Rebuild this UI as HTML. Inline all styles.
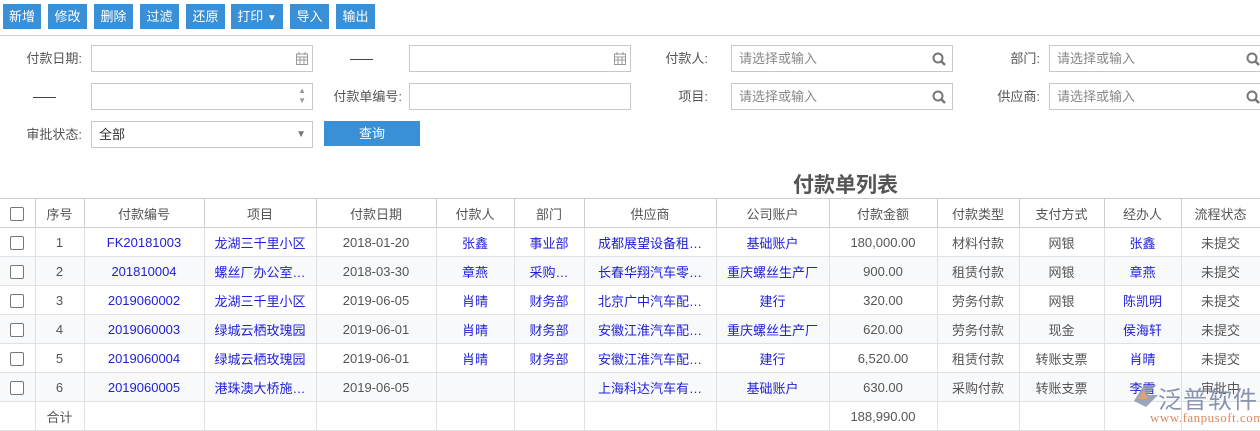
<!DOCTYPE html>
<html><head><meta charset="utf-8"><style>
*{box-sizing:border-box;margin:0;padding:0}
body{width:1260px;height:429px;overflow:hidden;background:#fff;font-family:"Liberation Sans","Noto Sans CJK SC",sans-serif;font-size:13px;color:#555;position:relative}
.b{position:absolute;top:4px;height:25px;background:#3a90d6;color:#fff;text-align:center;line-height:25px;font-size:13px}
.sep{position:absolute;top:35px;left:0;width:1260px;height:1px;background:#ccc}
.lbl{position:absolute;text-align:right;font-size:13px;color:#555;line-height:27px}
.in{position:absolute;height:27px;border:1px solid #c8c8c8;background:#fff;color:#888;line-height:25px;padding-left:7px;font-size:13px}
.dash{position:absolute;width:23px;height:1px;background:#444}
.ico{position:absolute;right:4px;top:6px}
table{position:absolute;left:0;top:198px;border-collapse:collapse;border-top:1px solid #2b82c4;table-layout:fixed;width:1260px}
td,th{border:1px solid #e0e0e0;height:29px;text-align:center;font-weight:normal;white-space:nowrap;overflow:hidden;font-size:13px;color:#555}
th{color:#555;border-color:#ccc}
tr:nth-child(odd) td{background:#f8f9fa}
td.l{color:#2020d8}
.cb{display:inline-block;width:14px;height:14px;border:1px solid #777;border-radius:2px;vertical-align:middle;background:#fff}
td:first-child,th:first-child{border-left:none}
</style></head><body>
<div class="b" style="left:3px;width:38px">新增</div>
<div class="b" style="left:48px;width:39px">修改</div>
<div class="b" style="left:94px;width:39px">删除</div>
<div class="b" style="left:140px;width:39px">过滤</div>
<div class="b" style="left:186px;width:39px">还原</div>
<div class="b" style="left:231px;width:52px">打印 <span style="font-size:10px">▼</span></div>
<div class="b" style="left:290px;width:39px">导入</div>
<div class="b" style="left:336px;width:39px">输出</div>
<div class="sep"></div>

<div class="lbl" style="left:0;width:82px;top:45px">付款日期:</div>
<div class="in" style="left:91px;top:45px;width:222px"><svg class="ico" width="12" height="13" viewBox="0 0 12 13"><rect x="0.5" y="2" width="11" height="10.5" fill="#fff" stroke="#999"/><path d="M1 5h10M1 8h10M4 5v7M8 5v7M3 0v3M9 0v3" stroke="#999"/></svg></div>
<div class="dash" style="left:350px;top:59px"></div>
<div class="in" style="left:409px;top:45px;width:222px"><svg class="ico" width="12" height="13" viewBox="0 0 12 13"><rect x="0.5" y="2" width="11" height="10.5" fill="#fff" stroke="#999"/><path d="M1 5h10M1 8h10M4 5v7M8 5v7M3 0v3M9 0v3" stroke="#999"/></svg></div>
<div class="lbl" style="left:640px;width:68px;top:45px">付款人:</div>
<div class="in" style="left:731px;top:45px;width:222px">请选择或输入<svg class="ico" width="14" height="14" viewBox="0 0 14 14" style="top:6px;right:6px"><circle cx="6" cy="6" r="4.5" fill="none" stroke="#777" stroke-width="2"/><path d="M9 9l4 4" stroke="#777" stroke-width="2.5"/></svg></div>
<div class="lbl" style="left:960px;width:80px;top:45px">部门:</div>
<div class="in" style="left:1049px;top:45px;width:222px">请选择或输入<svg width="14" height="14" viewBox="0 0 14 14" style="position:absolute;left:196px;top:6px"><circle cx="6" cy="6" r="4.5" fill="none" stroke="#777" stroke-width="2"/><path d="M9 9l4 4" stroke="#777" stroke-width="2.5"/></svg></div>

<div class="dash" style="left:33px;top:97px"></div>
<div class="in" style="left:91px;top:83px;width:222px"><span style="position:absolute;right:6px;top:2px;font-size:8px;color:#999;line-height:10px">▲<br>▼</span></div>
<div class="lbl" style="left:310px;width:92px;top:83px">付款单编号:</div>
<div class="in" style="left:409px;top:83px;width:222px"></div>
<div class="lbl" style="left:640px;width:68px;top:83px">项目:</div>
<div class="in" style="left:731px;top:83px;width:222px">请选择或输入<svg class="ico" width="14" height="14" viewBox="0 0 14 14" style="top:6px;right:6px"><circle cx="6" cy="6" r="4.5" fill="none" stroke="#777" stroke-width="2"/><path d="M9 9l4 4" stroke="#777" stroke-width="2.5"/></svg></div>
<div class="lbl" style="left:960px;width:80px;top:83px">供应商:</div>
<div class="in" style="left:1049px;top:83px;width:222px">请选择或输入<svg width="14" height="14" viewBox="0 0 14 14" style="position:absolute;left:196px;top:6px"><circle cx="6" cy="6" r="4.5" fill="none" stroke="#777" stroke-width="2"/><path d="M9 9l4 4" stroke="#777" stroke-width="2.5"/></svg></div>

<div class="lbl" style="left:0;width:82px;top:121px">审批状态:</div>
<div class="in" style="left:91px;top:121px;width:222px;color:#333">全部<span style="position:absolute;right:6px;top:0;font-size:10px;color:#777">▼</span></div>
<div class="b" style="left:324px;top:121px;width:96px">查询</div>

<div style="position:absolute;left:793px;top:169px;font-size:21px;font-weight:bold;color:#555">付款单列表</div>

<table>
<colgroup><col style="width:35px"><col style="width:49px"><col style="width:120px"><col style="width:112px"><col style="width:120px"><col style="width:78px"><col style="width:70px"><col style="width:132px"><col style="width:113px"><col style="width:108px"><col style="width:82px"><col style="width:85px"><col style="width:77px"><col style="width:79px"></colgroup>
<tr><th><span class="cb"></span></th><th>序号</th><th>付款编号</th><th>项目</th><th>付款日期</th><th>付款人</th><th>部门</th><th>供应商</th><th>公司账户</th><th>付款金额</th><th>付款类型</th><th>支付方式</th><th>经办人</th><th>流程状态</th></tr>
<tr><td><span class="cb"></span></td><td>1</td><td class="l">FK20181003</td><td class="l">龙湖三千里小区</td><td>2018-01-20</td><td class="l">张鑫</td><td class="l">事业部</td><td class="l">成都展望设备租…</td><td class="l">基础账户</td><td>180,000.00</td><td>材料付款</td><td>网银</td><td class="l">张鑫</td><td>未提交</td></tr>
<tr><td><span class="cb"></span></td><td>2</td><td class="l">201810004</td><td class="l">螺丝厂办公室…</td><td>2018-03-30</td><td class="l">章燕</td><td class="l">采购…</td><td class="l">长春华翔汽车零…</td><td class="l">重庆螺丝生产厂</td><td>900.00</td><td>租赁付款</td><td>网银</td><td class="l">章燕</td><td>未提交</td></tr>
<tr><td><span class="cb"></span></td><td>3</td><td class="l">2019060002</td><td class="l">龙湖三千里小区</td><td>2019-06-05</td><td class="l">肖晴</td><td class="l">财务部</td><td class="l">北京广中汽车配…</td><td class="l">建行</td><td>320.00</td><td>劳务付款</td><td>网银</td><td class="l">陈凯明</td><td>未提交</td></tr>
<tr><td><span class="cb"></span></td><td>4</td><td class="l">2019060003</td><td class="l">绿城云栖玫瑰园</td><td>2019-06-01</td><td class="l">肖晴</td><td class="l">财务部</td><td class="l">安徽江淮汽车配…</td><td class="l">重庆螺丝生产厂</td><td>620.00</td><td>劳务付款</td><td>现金</td><td class="l">侯海轩</td><td>未提交</td></tr>
<tr><td><span class="cb"></span></td><td>5</td><td class="l">2019060004</td><td class="l">绿城云栖玫瑰园</td><td>2019-06-01</td><td class="l">肖晴</td><td class="l">财务部</td><td class="l">安徽江淮汽车配…</td><td class="l">建行</td><td>6,520.00</td><td>租赁付款</td><td>转账支票</td><td class="l">肖晴</td><td>未提交</td></tr>
<tr><td><span class="cb"></span></td><td>6</td><td class="l">2019060005</td><td class="l">港珠澳大桥施…</td><td>2019-06-05</td><td></td><td></td><td class="l">上海科达汽车有…</td><td class="l">基础账户</td><td>630.00</td><td>采购付款</td><td>转账支票</td><td class="l">李雪</td><td>审批中</td></tr>
<tr><td style="background:#fff"></td><td style="background:#fff">合计</td><td></td><td></td><td></td><td></td><td></td><td></td><td></td><td>188,990.00</td><td></td><td></td><td></td><td></td></tr>
</table>
<div style="position:absolute;left:1130px;top:381px;width:30px;height:28px">
<svg width="30" height="28" viewBox="0 0 30 28"><path d="M4 20 L14 4 L26 4 L18 14 L28 14 L16 26 Z" fill="#8a96b0" opacity="0.85"/><path d="M8 18 L14 10 L18 18 Z" fill="#e8a070"/></svg></div>
<div style="position:absolute;left:1158px;top:380px;font-size:24px;color:#7d8aa8;opacity:0.9;letter-spacing:1px">泛普软件</div>
<div style="position:absolute;left:1150px;top:410px;font-size:13px;color:#d98a60;font-family:'Liberation Serif',serif;letter-spacing:0.5px">www.fanpusoft.com</div>
</body></html>
